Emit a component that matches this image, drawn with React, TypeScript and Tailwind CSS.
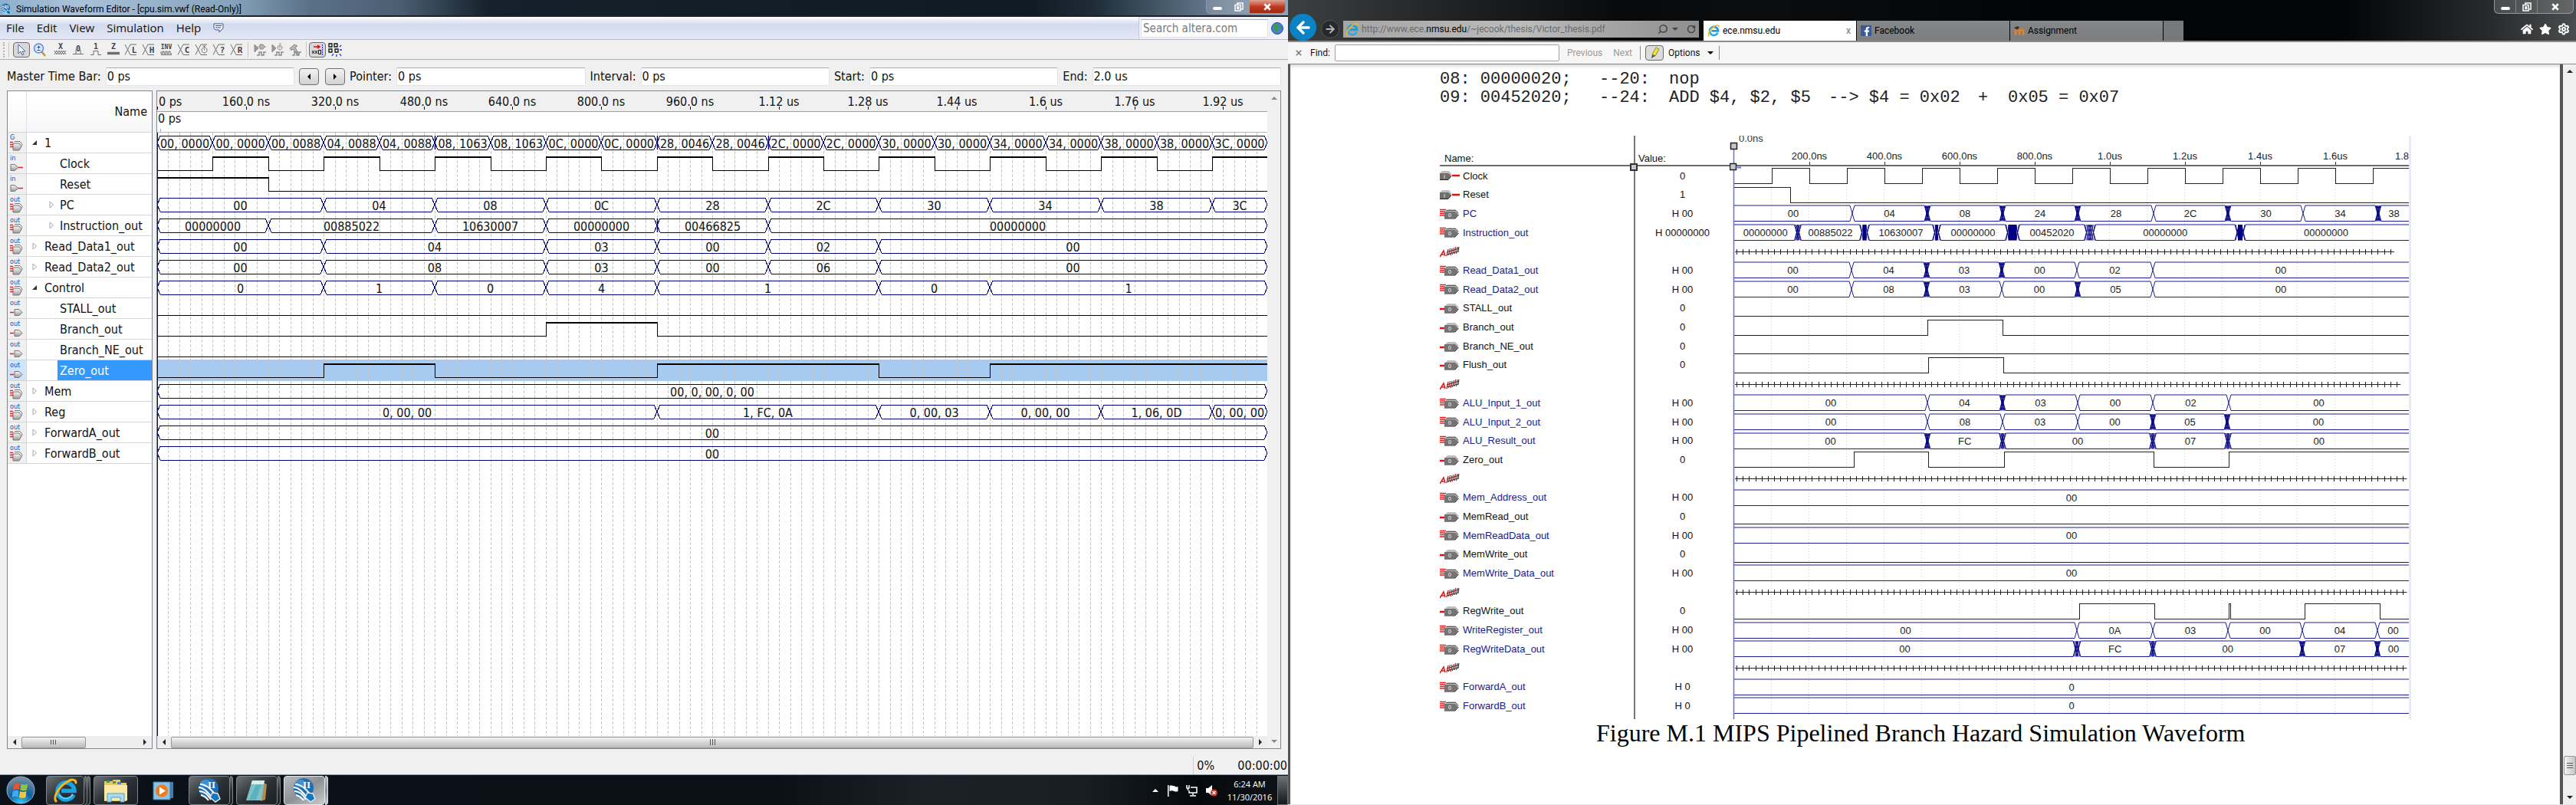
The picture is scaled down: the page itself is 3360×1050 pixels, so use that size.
import React from "react";
import { Search, RotateCw, Settings, ArrowLeft, ArrowRight } from "lucide-react";
import { FaHome, FaStar, FaFacebookF } from "react-icons/fa";

/* ---------- shared drawings ---------- */

function IeIcon({ className }: { className: string }) {
  return (
    <svg viewBox="0 0 32 32" className={className} aria-hidden="true">
      <path d="M27 21.5A11 11 0 1 1 28 16.5H11" fill="none" stroke="#1ba1e2" strokeWidth="5.5" />
      <path d="M26 20.8A10 10 0 0 1 8 21" fill="none" stroke="#7fd4f7" strokeWidth="1.5" />
      <path d="M4 30C0 25 7 12 18 5c6-4 12-4 12 1" fill="none" stroke="#f4b81c" strokeWidth="3" strokeLinecap="round" />
    </svg>
  );
}

function QuartusIcon({ className }: { className: string }) {
  return (
    <svg viewBox="0 0 32 32" className={className} aria-hidden="true">
      <ellipse cx="15" cy="13" rx="13" ry="13" fill="#1b6fb5" />
      <ellipse cx="11" cy="7" rx="7" ry="5" fill="#5ea9dc" opacity="0.6" />
      <path d="M2 12c6 0 13 6 18 15M3 17c6 0 11 4 15 11M5 22c4 1 7 3 10 7M4 8c8 0 16 7 20 15" fill="none" stroke="#fff" strokeWidth="2" />
      <path d="M20 19l7 1 3 7-6 4-7-6z" fill="#1476bd" stroke="#dfe8ee" strokeWidth="1.5" />
      <text x="14" y="13" fontFamily="Liberation Serif" fontWeight="bold" fontSize="13" fill="#fff">II</text>
    </svg>
  );
}

function Caret({ dir, className = "text-[#222]" }: { dir: "l" | "r" | "u" | "d"; className?: string }) {
  const d = { l: "M7 1L3 5l4 4z", r: "M3 1l4 4-4 4z", u: "M1 7l4-4 4 4z", d: "M1 3l4 4 4-4z" }[dir];
  return (
    <svg viewBox="0 0 10 10" className={`size-2.5 ${className}`} aria-hidden="true">
      <path d={d} fill="currentColor" />
    </svg>
  );
}

/* ---------- simulation window data ---------- */

type Bus = { at: number[]; v: string[]; bold?: number[] };
type Sig = { name: string; lvl: number; kind: "g" | "in" | "out" | "bus"; tree?: "open" | "closed"; bus?: Bus; bit?: number[]; sel?: boolean };

const NS = 0.7242;
const SIGS: Sig[] = [
  {
    name: "1", lvl: 0, kind: "g", tree: "open",
    bus: {
      at: Array.from({ length: 21 }, (_, i) => i * 100),
      v: ["00, 0000", "00, 0000", "00, 0088", "04, 0088", "04, 0088", "08, 1063", "08, 1063", "0C, 0000", "0C, 0000", "28, 0046", "28, 0046", "2C, 0000", "2C, 0000", "30, 0000", "30, 0000", "34, 0000", "34, 0000", "38, 0000", "38, 0000", "3C, 0000"],
      bold: [500, 900, 1100],
    },
  },
  { name: "Clock", lvl: 1, kind: "in", bit: Array.from({ length: 19 }, (_, i) => (i + 1) * 100) },
  { name: "Reset", lvl: 1, kind: "in", bit: [0, 200] },
  { name: "PC", lvl: 1, kind: "bus", tree: "closed", bus: { at: [0, 300, 500, 700, 900, 1100, 1300, 1500, 1700, 1900, 2000], v: ["00", "04", "08", "0C", "28", "2C", "30", "34", "38", "3C"] } },
  { name: "Instruction_out", lvl: 1, kind: "bus", tree: "closed", bus: { at: [0, 200, 500, 700, 900, 1100, 2000], v: ["00000000", "00885022", "10630007", "00000000", "00466825", "00000000"], bold: [900] } },
  { name: "Read_Data1_out", lvl: 0, kind: "bus", tree: "closed", bus: { at: [0, 300, 700, 900, 1100, 1300, 2000], v: ["00", "04", "03", "00", "02", "00"] } },
  { name: "Read_Data2_out", lvl: 0, kind: "bus", tree: "closed", bus: { at: [0, 300, 700, 900, 1100, 1300, 2000], v: ["00", "08", "03", "00", "06", "00"] } },
  { name: "Control", lvl: 0, kind: "bus", tree: "open", bus: { at: [0, 300, 500, 700, 900, 1300, 1500, 2000], v: ["0", "1", "0", "4", "1", "0", "1"] } },
  { name: "STALL_out", lvl: 1, kind: "out", bit: [] },
  { name: "Branch_out", lvl: 1, kind: "out", bit: [700, 900] },
  { name: "Branch_NE_out", lvl: 1, kind: "out", bit: [] },
  { name: "Zero_out", lvl: 1, kind: "out", bit: [300, 500, 900, 1300, 1500], sel: true },
  { name: "Mem", lvl: 0, kind: "bus", tree: "closed", bus: { at: [0, 2000], v: ["00, 0, 00, 0, 00"] } },
  { name: "Reg", lvl: 0, kind: "bus", tree: "closed", bus: { at: [0, 900, 1300, 1500, 1700, 1900, 2000], v: ["0, 00, 00", "1, FC, 0A", "0, 00, 03", "0, 00, 00", "1, 06, 0D", "0, 00, 00"] } },
  { name: "ForwardA_out", lvl: 0, kind: "bus", tree: "closed", bus: { at: [0, 2000], v: ["00"] } },
  { name: "ForwardB_out", lvl: 0, kind: "bus", tree: "closed", bus: { at: [0, 2000], v: ["00"] } },
];

const TIMES = ["0 ps", "160.0 ns", "320.0 ns", "480.0 ns", "640.0 ns", "800.0 ns", "960.0 ns", "1.12 us", "1.28 us", "1.44 us", "1.6 us", "1.76 us", "1.92 us"];
const px = (t: number) => Math.round(t * NS);

function EditorWaves() {
  return (
    <svg width="1449" height="787" className="block shrink-0 font-['DejaVu_Sans_Condensed','DejaVu_Sans',sans-serif] text-[16px]">
      {SIGS.map((s, i) => (s.sel ? <rect key={i} x="1" y={i * 27 - 1} width="1448" height="28" fill="#a6caf0" /> : null))}
      <g stroke="#c6c6c6" strokeDasharray="4 2" shapeRendering="crispEdges">
        {Array.from({ length: 99 }, (_, i) => (
          <line key={i} x1={px((i + 1) * 20) + 0.5} x2={px((i + 1) * 20) + 0.5} y1="0" y2="787" />
        ))}
      </g>
      {SIGS.map((s, i) => {
        const y = i * 27;
        if (s.bus) {
          const { at, v, bold } = s.bus;
          return (
            <g key={i}>
              {v.map((t, k) => {
                const a = px(at[k]);
                const b = px(at[k + 1]);
                return (
                  <g key={k}>
                    <path d={`M${a} ${y + 13}l4 -9H${b - 4}l4 9l-4 9H${a + 4}z`} fill="none" stroke="#00007f" shapeRendering="crispEdges" />
                    <text x={(a + b) / 2} y={y + 20} textAnchor="middle" fill="#111">{t}</text>
                  </g>
                );
              })}
              {bold?.map((t) => <path key={t} d={`M${px(t) + 0.5} ${y + 4}v18`} stroke="#00007f" strokeWidth="1.5" />)}
            </g>
          );
        }
        const edges = s.bit ?? [];
        const segs: React.ReactNode[] = [];
        let high = false;
        let from = 0;
        [...edges, 2000].forEach((t, k) => {
          if (t > from) {
            segs.push(<rect key={`h${k}`} x={px(from)} y={high ? y + 4 : y + 22} width={px(t) - px(from)} height={high ? 2 : 1} />);
          }
          if (t > 0 && t < 2000) segs.push(<rect key={`v${k}`} x={px(t)} y={y + 4} width="1" height="19" />);
          from = t;
          high = !high;
        });
        return <g key={i}>{segs}</g>;
      })}
      <rect x="0" y="0" width="1" height="787" fill="#0000c8" />
    </svg>
  );
}

function PinIcon({ kind }: { kind: Sig["kind"] }) {
  const label = kind === "g" ? "G" : kind === "in" ? "in" : "out";
  const multi = kind === "g" || kind === "bus";
  return (
    <svg width="18" height="22" viewBox="0 0 18 22" aria-hidden="true" className="font-['DejaVu_Sans_Condensed','DejaVu_Sans',sans-serif] text-[9px]">
      <defs>
        <linearGradient id="pin" x1="0" y1="0" x2="0" y2="1">
          <stop offset="0" stopColor="#f6f6f6" />
          <stop offset="1" stopColor="#9c9c9c" />
        </linearGradient>
      </defs>
      <text x="0" y="7" fill="#2b4fae">{label}</text>
      {multi ? (
        <>
          <path d="M6 9.5h7l3 4-1 2" fill="none" stroke="#777" />
          <path d="M4 12h8l3 4-3 5H4z" fill="url(#pin)" stroke="#777" />
          <path d="M0 10.500h4M0 13.500h4M0 16.500h4" stroke="#e0202a" strokeWidth="1.500" />
        </>
      ) : kind === "in" ? (
        <>
          <path d="M1 12.500h5l5 4-5 4H1z" fill="url(#pin)" stroke="#777" />
          <path d="M11 16.500h6" stroke="#e0202a" strokeWidth="1.500" />
        </>
      ) : (
        <>
          <path d="M6 12.500h6l4 4-4 4H6z" fill="url(#pin)" stroke="#777" />
          <path d="M0 16.500h5" stroke="#e0202a" strokeWidth="1.500" />
        </>
      )}
    </svg>
  );
}

const TOOL_ICONS: { t: string; w?: "x" | "n" | "u" | "z" | "b"; label: string }[] = [
  { t: "X", w: "x", label: "Forcing unknown" },
  { t: "0", w: "n", label: "Forcing low" },
  { t: "1", w: "u", label: "Forcing high" },
  { t: "Z", w: "z", label: "High impedance" },
  { t: "L", w: "b", label: "Weak low" },
  { t: "H", w: "b", label: "Weak high" },
  { t: "INV", label: "Invert" },
  { t: "C", w: "b", label: "Count value" },
  { t: "", w: "b", label: "Overwrite clock" },
  { t: "?", w: "b", label: "Arbitrary value" },
  { t: "R", w: "b", label: "Random values" },
];

function ToolGlyph({ t, w }: { t: string; w?: string }) {
  return (
    <svg width="18" height="18" viewBox="0 0 18 18" fill="none" stroke="#6e6e6e" strokeWidth="1" aria-hidden="true" className="font-['DejaVu_Sans_Mono',monospace]">
      {w === "x" && <path d="M1 10l3 5 3-5 3 5 3-5 3 5M1 15l3-5 3 5 3-5 3 5 3-5" />}
      {w === "n" && <path d="M2 14.500h4V8.500M12 8.500v6h4M6 14.500h6" />}
      {w === "u" && <path d="M2 15.500h4v-5h6v5h4" />}
      {w === "z" && <path d="M1 13.500h16" strokeWidth="3.500" />}
      {w === "b" && <path d="M1 2l7 13.500h8M8 2L1 15.500M8 2h8" />}
      {t === "" && <path d="M12.500 6v-2M10.500 4h4M12.500 6a3.500 3.500 0 1 0 .1 0M12.500 9.500v-2" />}
      {t === "INV" && <path d="M2 11v3h2v-3h2v3h2v-3h2v3h2v-3h2v3h2M2 15.500h14" />}
      <text
        x={w === "b" ? 13 : 9}
        y={w === "b" ? 13 : w === "n" ? 11 : 8}
        textAnchor="middle"
        fontSize={t === "INV" ? 8 : w === "b" ? 11 : 10}
        fontWeight="bold"
        stroke="none"
        fill="#444"
      >
        {t}
      </text>
    </svg>
  );
}

function TimeField({ id, label, value }: { id: string; label: string; value: string }) {
  return (
    <>
      <label htmlFor={id}>{label}</label>
      <input id={id} defaultValue={value} readOnly className="h-6 w-0 min-w-0 flex-1 rounded-xs border border-[#e2e3ea] border-t-[#abadb3] bg-white px-px outline-none" />
    </>
  );
}

function HScroll({ thumb, grip }: { thumb: string; grip: string }) {
  return (
    <div className="flex h-4 shrink-0 items-center bg-[#eeeeee]">
      <button aria-label="Scroll left" className="flex w-[18px] justify-center"><Caret dir="l" /></button>
      <div className="flex flex-1">
        <div className={`flex h-[15px] items-center justify-center gap-0.5 rounded-xs border border-[#979797] bg-linear-to-b from-[#f4f4f4] via-[#d6d6d6] to-[#bcbcbc] ${thumb}`}>
          {[0, 1, 2].map((i) => <span key={i} className={`w-px bg-[#555] ${grip}`} />)}
        </div>
      </div>
      <button aria-label="Scroll right" className="flex w-[18px] justify-center"><Caret dir="r" /></button>
    </div>
  );
}

function WindowButtons({ close }: { close: string }) {
  return (
    <div className="mr-[3px] flex h-[18px] overflow-hidden rounded-b-md border border-t-0 border-[#8c9aa6]">
      <button aria-label="Minimize" className="flex w-7 items-center justify-center border-r border-[#8c9aa6]/70 bg-white/15">
        <span className="mt-1 h-1 w-3 rounded-xs bg-white" />
      </button>
      <button aria-label="Restore" className="flex w-7 items-center justify-center border-r border-[#8c9aa6]/70 bg-white/15">
        <svg viewBox="0 0 12 12" className="size-3" fill="none" stroke="#fff" strokeWidth="1.500"><path d="M4 3V1h7v8H9M1 3.500h7V11H1zM4 6v2.500h1.500V6z" /></svg>
      </button>
      <button aria-label="Close" className={`flex w-[46px] items-center justify-center ${close}`}>
        <svg viewBox="0 0 12 12" className="size-2.5" stroke="#fff" strokeWidth="3"><path d="M1.500 1.500l9 9M10.500 1.500l-9 9" /></svg>
      </button>
    </div>
  );
}

/* ---------- simulation window ---------- */

function Editor() {
  return (
    <section className="flex min-h-0 flex-1 flex-col bg-[#f0f0f0] font-['DejaVu_Sans_Condensed','DejaVu_Sans',sans-serif] text-[16px] text-[#111]">
      <header className="flex h-[22px] items-start justify-between border-b-2 border-[#1a222b] bg-[linear-gradient(90deg,#8fb0cc_0%,#a9c2d8_6%,#86a3bd_18%,#5b7188_24%,#4b5f73_31%,#14202b_38%,#101a22_80%,#1f2d39_85%,#5b7084_93%,#8fa4b8_100%)]">
        <div className="flex h-5 items-center gap-1.5 pt-1 font-[Roboto,sans-serif] text-[12px] text-black">
          <QuartusIcon className="h-4 w-[15px]" />
          <h1>Simulation Waveform Editor - [cpu.sim.vwf (Read-Only)]</h1>
        </div>
        <WindowButtons close="bg-linear-to-b from-[#dba294] via-[#c2391f] to-[#9c2a12]" />
      </header>

      <nav className="flex h-[30px] items-center border-b border-[#b6bccc] bg-linear-to-b from-white via-[#d4dbee] via-35% to-[#e3e7f6] font-['Open_Sans',sans-serif] text-[15px]">
        <div className="flex items-center gap-4 pl-2">
          {["File", "Edit", "View", "Simulation", "Help"].map((m) => <button key={m}>{m}</button>)}
          <button aria-label="Messages">
            <svg width="14" height="14" viewBox="0 0 14 14" fill="#eef4ff" stroke="#3b5a8c"><path d="M1 1h12v6l-5 5V9H3L1 7zM3 3.500h8M3 6h7" /></svg>
          </button>
        </div>
        <div className="ml-auto flex h-full items-center gap-1 border-l border-[#c3c9d8] bg-[#eef1fa] pr-1.5 pl-0.5">
          <input aria-label="Search altera.com" placeholder="Search altera.com" className="h-6 w-[166px] border border-t-[#abadb3] border-[#e2e3ea] bg-white px-0.5 font-['DejaVu_Sans_Condensed','DejaVu_Sans',sans-serif] text-[15px] outline-none placeholder:text-[#7b7b7b]" />
          <button aria-label="Search">
            <svg width="16" height="16" viewBox="0 0 16 16"><circle cx="8" cy="8" r="7.500" fill="#4d7fd6" stroke="#23479a" /><path d="M4 3l5-1 1 3-2 2 1 3-2 4-2-4-2-3zM11 5l3 1-1 4-2-2z" fill="#39a03c" /></svg>
          </button>
        </div>
      </nav>

      <div className="flex h-[26px] items-center border-b border-[#b0b0b0] pl-1">
        <span className="h-5 border-l-2 border-dotted border-[#b5b5b5]" />
        <span className="mx-[5px] h-5 border-l border-[#c8c8c8]" />
        <button aria-label="Selection tool" className="flex h-5 w-[22px] items-center justify-center rounded-sm border border-[#6c6c6c] bg-[#d8d8d8]">
          <svg width="12" height="16" viewBox="0 0 12 16" fill="#fff" stroke="#4668a0"><path d="M2 1v12l3-3 2 5 2-1-2-4h4z" /></svg>
        </button>
        <button aria-label="Zoom tool" className="mr-1 flex w-6 justify-center">
          <svg width="17" height="18" viewBox="0 0 17 18" fill="none"><path d="M11 11l5 6" stroke="#c98f4a" strokeWidth="2.500" /><circle cx="7.500" cy="7" r="6" fill="#dbe9ff" stroke="#5f86d8" strokeWidth="1.500" /><path d="M7.500 3.500v4M5.500 5.500h4M5.500 9.500h4" stroke="#1c49a8" /></svg>
        </button>
        {TOOL_ICONS.map((o) => (
          <button key={o.label} aria-label={o.label} className="flex w-[23px] justify-center"><ToolGlyph t={o.t} w={o.w} /></button>
        ))}
        <span className="mx-[3px] h-5 border-l border-[#c8c8c8]" />
        {[0, 1, 2].map((i) => (
          <button key={i} aria-label={["Run functional simulation", "Run timing simulation", "Generate testbench"][i]} className="flex w-[23px] justify-center">
            <svg width="18" height="18" viewBox="0 0 18 18" fill="none" stroke="#8a8a8a">
              {i < 2 && <path d="M2 2v10l5-5z" fill="#9a9a9a" />}
              {i === 0 && <path d="M9 2h4l2 3-2 3H9zM6 5h3M15 5h2" fill="#b5b5b5" />}
              {i === 1 && <path d="M12 3a3 3 0 1 0 .1 0M12 6V4M11 1h3" fill="#dedede" />}
              {i === 2 && <path d="M2 7l6-5 4 2-3 2 5 9-2 1-6-8-2 2z" fill="#b5b5b5" />}
              <path d="M5 16h3v-4h3v4h3v-4h3" strokeWidth="1.500" />
            </svg>
          </button>
        ))}
        <span className="mx-[3px] h-5 border-l border-[#c8c8c8]" />
        <button aria-label="Snap to transition" className="flex h-5 w-[22px] items-center justify-center rounded-sm border border-[#6c6c6c] bg-[#d8d8d8]">
          <svg width="16" height="16" viewBox="0 0 16 16" fill="none" stroke="#111"><path d="M3 4h7M8 2l3 2-3 2" stroke="#e00" strokeWidth="1.500" /><path d="M1 9l3 4M4 9l-3 4M5 9l3 4M8 9l-3 4M9.500 8.500h3v5h-3z" /><path d="M14.500 1v14" stroke="#22f" strokeDasharray="2 1" /></svg>
        </button>
        <button aria-label="Snap to grid" className="flex w-6 justify-center">
          <svg width="18" height="18" viewBox="0 0 18 18" fill="none" stroke="#111" strokeWidth="1.300"><path d="M1 1h4v4H1zM8 1h4v4H8zM1 8h4v4H1zM9 8h4v4H9z" /><path d="M15 5l2-2M15 9h3M7 14l-2 3M11 15v3M15 14l2 3" stroke="#22f" /></svg>
        </button>
      </div>

      <div className="flex h-10 items-center gap-1.5 pt-1 pr-[9px] pl-[9px]">
        <TimeField id="master" label="Master Time Bar:" value="0 ps" />
        <div className="flex gap-2">
          {(["l", "r"] as const).map((d) => (
            <button key={d} aria-label={d === "l" ? "Previous transition" : "Next transition"} className="flex h-[22px] w-[26px] items-center justify-center rounded-sm border border-[#707070] bg-linear-to-b from-[#f4f4f4] to-[#d0d0d0]">
              <Caret dir={d} className="text-black" />
            </button>
          ))}
        </div>
        <TimeField id="pointer" label="Pointer:" value="0 ps" />
        <TimeField id="interval" label="Interval:" value="0 ps" />
        <TimeField id="start" label="Start:" value="0 ps" />
        <TimeField id="end" label="End:" value="2.0 us" />
      </div>

      <div className="flex min-h-0 flex-1 gap-[5px] pr-[9px] pl-[9px]">
        <div className="flex w-[190px] flex-col border border-[#828790] bg-white">
          <div className="flex h-[54px] shrink-0 border-b border-[#d5d5d5] bg-linear-to-b from-white from-20% to-[#f5f6f8]">
            <span className="w-[25px] border-r border-[#e0e2e5]" />
            <span className="flex-1 self-center pr-1.5 text-right">Name</span>
          </div>
          <ul className="flex-1">
            {SIGS.map((s) => (
              <li key={s.name} className="flex h-[27px] border-b border-[#d5d5d5]">
                <span className={`flex w-[25px] shrink-0 items-center justify-center border-r border-[#d5d5d5] ${s.sel ? "bg-[#cfe5fb]" : "bg-[#f0f0f0]"}`}>
                  <PinIcon kind={s.kind} />
                </span>
                <span className={`flex w-5 shrink-0 items-center justify-center ${s.lvl ? "mr-px ml-[22px]" : "mr-[3px]"}`}>
                  {s.tree === "open" && <svg width="7" height="8" viewBox="0 0 7 8"><path d="M6 1v6H0z" fill="#333" /></svg>}
                  {s.tree === "closed" && <svg width="7" height="10" viewBox="0 0 7 10"><path d="M1 1v8l4.500-4z" fill="#fff" stroke="#a5a5a5" /></svg>}
                </span>
                <span className={`flex flex-1 items-center pt-0.5 whitespace-nowrap ${s.sel ? "-ml-[3px] bg-[#3399ff] pl-[3px] text-white" : ""}`}>{s.name}</span>
              </li>
            ))}
          </ul>
          <HScroll thumb="w-[55%]" grip="h-1.5" />
        </div>

        <div className="flex min-w-0 flex-1 border border-[#828790] bg-white">
          <div className="flex min-w-0 flex-1 flex-col">
            <div className="h-[54px] shrink-0 overflow-hidden border-b border-[#b5b5b5]">
              <svg width="1449" height="53" className="block text-[16px]">
                <rect width="1449" height="26" fill="#f0f0f0" />
                <rect y="26" width="1449" height="1" fill="#a0a0a0" />
                {TIMES.map((t, i) => (
                  <g key={t}>
                    <rect x={px(i * 160)} y="20" width="1" height="4" fill="#111" />
                    <text x={i ? px(i * 160) : 2} y="19" textAnchor={i ? "middle" : "start"} fill="#111">{t}</text>
                  </g>
                ))}
                <text x="1" y="41" fill="#111">0 ps</text>
                <path d="M4.500 49v4" stroke="#aaa" />
              </svg>
            </div>
            <div className="min-h-0 flex-1 overflow-hidden"><EditorWaves /></div>
            <HScroll thumb="flex-1" grip="h-2" />
          </div>
          <div className="flex w-[17px] flex-col items-center justify-between bg-[#f0f0f0] py-1">
            <button aria-label="Scroll up"><Caret dir="u" className="text-[#888]" /></button>
            <button aria-label="Scroll down"><Caret dir="d" className="text-[#888]" /></button>
          </div>
        </div>
      </div>

      <footer className="flex h-[33px] items-center justify-end pt-2.5">
        <span className="w-[58px] border-l border-[#d0d0d0] pl-1">0%</span>
        <span className="pr-px">00:00:00</span>
      </footer>
    </section>
  );
}

/* ---------- taskbar ---------- */

function TaskButton({ label, stack = 0, active, children }: { label: string; stack?: number; active?: boolean; children: React.ReactNode }) {
  const face = active ? "from-[#b9bcbf] via-[#8d9195] to-[#c9ccce] border-[#e4e6e8]" : "from-[#6d7276] via-[#2c3135] to-[#1c2024] border-[#7f858a]";
  return (
    <button aria-label={label} className="flex h-[38px] w-[58px]">
      <span className={`flex h-full flex-1 items-center justify-center rounded-sm border bg-linear-to-br ${face}`}>{children}</span>
      {Array.from({ length: stack }, (_, i) => (
        <span key={i} className={`h-full w-1 rounded-r-sm border border-l-0 bg-linear-to-b ${face}`} />
      ))}
    </button>
  );
}

function Taskbar() {
  return (
    <footer className="flex h-10 items-center border-t border-[#8a98a6] bg-[linear-gradient(90deg,#0a1118_0%,#0b1016_60%,#1b2126_72%,#191e22_84%,#05090c_93%,#101418_100%)] font-['Open_Sans',sans-serif] text-white">
      <button aria-label="Start" className="mr-3.5 ml-2">
        <svg width="38" height="37" viewBox="0 0 38 37">
          <defs>
            <radialGradient id="orb" cx="0.5" cy="1" r="0.9"><stop offset="0" stopColor="#2fd0ff" /><stop offset="0.5" stopColor="#0d5f9e" /><stop offset="1" stopColor="#6d8aa0" /></radialGradient>
          </defs>
          <ellipse cx="19" cy="18.500" rx="18" ry="17.500" fill="url(#orb)" stroke="#9fb6c6" />
          <path d="M10 11q4-3 8-1l-1 8q-4-2-8 1z" fill="#e8542a" />
          <path d="M19.500 10.500q4 2 8.500 0l-1 8q-4 2-8.500 0z" fill="#8cc63f" />
          <path d="M8.500 20.500q4-3 8-1l-1 8q-4-2-8 1z" fill="#3fa9f5" />
          <path d="M18 20q4 2 8.500 0l-1 8q-4 2-8.500 0z" fill="#fbc52d" />
        </svg>
      </button>
      <div className="flex gap-1">
        <TaskButton label="Internet Explorer" stack={2}><IeIcon className="size-8" /></TaskButton>
        <TaskButton label="File Explorer">
          <svg width="36" height="32" viewBox="0 0 36 32"><path d="M3 4h10l2-2h9v4h8v24H3z" fill="#e9c964" /><path d="M3 9h30v20H3z" fill="#fae9a6" /><path d="M6 3h4v3H6zM14 4h4v3h-4z" fill="#3b9b4e" /><path d="M20 5h5v3h-5z" fill="#3f7fd0" /><path d="M7 31V20h22v11h-5v-6H12v6z" fill="#a8dcf5" stroke="#4f9fcc" /></svg>
        </TaskButton>
        <button aria-label="Media Player" className="flex h-[38px] w-[58px] items-center justify-center">
          <svg width="28" height="26" viewBox="0 0 28 26"><path d="M6 2h21v21H6z" fill="#3d7fb0" /><path d="M1 2h22v23H1z" fill="#8cc3e4" stroke="#3a78a8" /><circle cx="12" cy="13.500" r="8" fill="#f07a1c" /><path d="M9 8.500v10l8-5z" fill="#fff" /></svg>
        </button>
        <TaskButton label="Quartus II" stack={1}><QuartusIcon className="size-8" /></TaskButton>
        <TaskButton label="Notepad" stack={1}>
          <svg width="32" height="30" viewBox="0 0 32 30"><path d="M22 4l7 3-2 20-6 2z" fill="#b58b4c" /><path d="M10 2h16l-4 26H2z" fill="#79c3cc" /><path d="M10 2h16l-1 5H8.500z" fill="#d5eef0" /><path d="M15 8L6 27h9l7-20z" fill="#4ba5b2" opacity="0.6" /></svg>
        </TaskButton>
        <TaskButton label="Simulation Waveform Editor" stack={1} active><QuartusIcon className="size-8" /></TaskButton>
      </div>
      <div className="ml-auto flex items-center gap-2.5">
        <button aria-label="Show hidden icons"><Caret dir="u" className="text-white" /></button>
        <svg width="15" height="16" viewBox="0 0 15 16" fill="#fff"><path d="M1 1h1.500v15H1zM3.500 2c3-1.500 4 1 7 0v1c1.500.5 3 .5 4 0v6c-2 1-3.500.5-5 0-2-1-4-1-6 0z" /></svg>
        <svg width="15" height="16" viewBox="0 0 15 16" fill="none" stroke="#fff" strokeWidth="1.500"><path d="M6 4h8v7H4V8M9 11v3M5 15h8M1 1v4h3V1M2.500 5v3" /></svg>
        <svg width="16" height="16" viewBox="0 0 16 16"><path d="M1 5h3l5-4v14l-5-4H1z" fill="#fff" /><circle cx="11.500" cy="11" r="4.500" fill="#d92a1c" /><path d="M9.500 9l4 4M13.500 9l-4 4" stroke="#fff" strokeWidth="1.500" /></svg>
        <button className="w-16 text-center text-[11px] leading-[17px]">6:24 AM<br />11/30/2016</button>
        <button aria-label="Show desktop" className="-ml-1.5 h-[38px] w-3.5 border border-[#6b7278] bg-linear-to-b from-[#6d7276] to-[#15191c]" />
      </div>
    </footer>
  );
}

/* ---------- thesis figure ---------- */

type Mark = number | [number, number];
type FigRow = { name?: string; kind?: "in" | "out" | "bus"; val?: string; at?: Mark[]; v?: string[]; bit?: number[] };
const FIG: FigRow[] = [
  { name: "Clock", kind: "in", val: "0", bit: Array.from({ length: 17 }, (_, i) => (i + 1) * 49) },
  { name: "Reset", kind: "in", val: "1", bit: [0, 73] },
  { name: "PC", kind: "bus", val: "H 00", at: [154, [252, 2], [350, 2], [448, 2], 547, [644, 2], 742, [840, 2]], v: ["00", "04", "08", "24", "28", "2C", "30", "34", "38"] },
  { name: "Instruction_out", kind: "bus", val: "H 00000000", at: [[83, 3], [170, 7], [264, 5], [363, 13], [464, 9], [660, 8]], v: ["00000000", "00885022", "10630007", "00000000", "00452020", "00000000", "00000000"] },
  {},
  { name: "Read_Data1_out", kind: "bus", val: "H 00", at: [153, [251, 2], [349, 2], 447, 546], v: ["00", "04", "03", "00", "02", "00"] },
  { name: "Read_Data2_out", kind: "bus", val: "H 00", at: [153, [251, 2], 349, [448, 2], 546], v: ["00", "08", "03", "00", "05", "00"] },
  { name: "STALL_out", kind: "out", val: "0", bit: [] },
  { name: "Branch_out", kind: "out", val: "0", bit: [252, 350] },
  { name: "Branch_NE_out", kind: "out", val: "0", bit: [] },
  { name: "Flush_out", kind: "out", val: "0", bit: [253, 351] },
  {},
  { name: "ALU_Input_1_out", kind: "bus", val: "H 00", at: [252, [350, 2], 448, 546, 645], v: ["00", "04", "03", "00", "02", "00"] },
  { name: "ALU_Input_2_out", kind: "bus", val: "H 00", at: [252, 350, 448, [546, 2], [643, 2]], v: ["00", "08", "03", "00", "05", "00"] },
  { name: "ALU_Result_out", kind: "bus", val: "H 00", at: [[252, 2], [350, 3], [546, 3], [644, 3]], v: ["00", "FC", "00", "07", "00"] },
  { name: "Zero_out", kind: "out", val: "0", bit: [156, 253, 352, 547, 645] },
  {},
  { name: "Mem_Address_out", kind: "bus", val: "H 00", at: [], v: ["00"] },
  { name: "MemRead_out", kind: "out", val: "0", bit: [] },
  { name: "MemReadData_out", kind: "bus", val: "H 00", at: [], v: ["00"] },
  { name: "MemWrite_out", kind: "out", val: "0", bit: [] },
  { name: "MemWrite_Data_out", kind: "bus", val: "H 00", at: [], v: ["00"] },
  {},
  { name: "RegWrite_out", kind: "out", val: "0", bit: [450, 548, 645, 647, 744, 842] },
  { name: "WriteRegister_out", kind: "bus", val: "H 00", at: [447, 546, 644, 741, 839], v: ["00", "0A", "03", "00", "04", "00"] },
  { name: "RegWriteData_out", kind: "bus", val: "H 00", at: [[447, 4], [546, 3], [741, 2], [839, 2]], v: ["00", "FC", "00", "07", "00"] },
  {},
  { name: "ForwardA_out", kind: "bus", val: "H 0", at: [], v: ["0"] },
  { name: "ForwardB_out", kind: "bus", val: "H 0", at: [], v: ["0"] },
];
const PITCH = 716 / 29;
const END = 880;

function FigIcon({ kind }: { kind?: FigRow["kind"] }) {
  if (!kind) {
    return (
      <svg width="26" height="16" viewBox="0 0 26 16" fill="none" aria-hidden="true">
        <path d="M0 15l5-8 2 7M2 12h5" stroke="#e02020" strokeWidth="1.600" />
        <path d="M9 14l2-9M14 13l2-9M19 11l2-9" stroke="#e02020" strokeWidth="1.400" />
        <path d="M11.500 13l2-9M16.500 12l2-9M21.500 11l2-9M24 9l1-7M9 9l16-5M9 12l15-4" stroke="#333" />
      </svg>
    );
  }
  return (
    <svg width="26" height="14" viewBox="0 0 26 14" aria-hidden="true" className="font-['Liberation_Sans',sans-serif] text-[7px]">
      {kind === "in" && (
        <>
          <path d="M0 4l3-3h9l4 5-4 2z" fill="#bdbdbd" />
          <path d="M0 4h11l4 3.500-4 4.500H0z" fill="#6e6e6e" />
          <path d="M0 12.500h11l4-5" fill="none" stroke="#222" />
          <path d="M16 7h10" stroke="#e81010" strokeWidth="2.500" />
          <text x="5" y="11" fill="#fff">I</text>
        </>
      )}
      {kind !== "in" && (
        <>
          {kind === "bus" ? <path d="M0 1.500h8M0 4h7M0 6.500h6M0 9h6" stroke="#f01818" strokeWidth="1.500" /> : <path d="M0 8h7" stroke="#e81010" strokeWidth="2.500" />}
          <path d="M7 4l3-3h10l5 5-4 2z" fill="#bdbdbd" />
          {kind === "bus" && <path d="M8 2.500h13l3 4" stroke="#444" fill="none" strokeWidth="0.800" />}
          <path d="M6 4h14l4 4-4 4.500H6z" fill="#747474" />
          <path d="M6 13h14l4.500-5" fill="none" stroke="#222" />
          <text x="11" y="11" fill="#fff">0</text>
        </>
      )}
    </svg>
  );
}

function FigWaves() {
  const base = 40;
  return (
    <svg width="892" height="761" className="block shrink-0 font-['Liberation_Sans',sans-serif] text-[13px]">
      <g transform="translate(6 0)">
        <text x="6" y="8" fill="#333">0.0ns</text>
        {["200.0ns", "400.0ns", "600.0ns", "800.0ns", "1.0us", "1.2us", "1.4us", "1.6us"].map((t, i) => (
          <g key={t}>
            <text x={(i + 1) * 98} y="31" textAnchor="middle" fill="#222">{t}</text>
            <rect x={(i + 1) * 98} y="34" width="1" height="5" fill="#333" />
          </g>
        ))}
        <text x={END - 18} y="31" fill="#222">1.8</text>
        <rect x="-6" y="38" width={END + 6} height="2" fill="#6b6b6b" />
        <g stroke="#cfcfcf" strokeDasharray="1 3" shapeRendering="crispEdges">
          {Array.from({ length: 17 }, (_, i) => <line key={i} x1={(i + 1) * 49 - 0.5} x2={(i + 1) * 49 - 0.5} y1="62" y2="756" />)}
        </g>
        {FIG.map((r, i) => {
          const y = Math.round(i * PITCH) + base;
          const top = y + 2;
          const bot = y + 22.5;
          if (!r.kind) {
            const n = i === 4 ? 105 : i === 11 ? 106 : 107;
            let d = `M1 ${y + 12.5}H${n * 8.2}`;
            for (let k = 0; k < n; k++) d += `M${Math.round(4 + k * 8.2) - 0.5} ${y + 9}v7`;
            return <path key={i} d={d} stroke="#222" fill="none" />;
          }
          if (r.bit) {
            let hi = false;
            let d = r.bit[0] === 0 ? `M0 ${top}` : `M0 ${bot}`;
            r.bit.forEach((x) => {
              hi = !hi;
              if (x > 0) d += `H${x + 0.5}V${hi ? top : bot}`;
            });
            d += `H${END}`;
            return <path key={i} d={d} fill="none" stroke="#222" shapeRendering="crispEdges" />;
          }
          const marks = (r.at ?? []).map((m) => (typeof m === "number" ? [m, 0] : m));
          const xs = [...marks, [END, 0]];
          let from = 0;
          const mid = (top + bot) / 2;
          return (
            <g key={i} stroke="#1c1c96" fill="none">
              {xs.map(([x, w], k) => {
                const a = from;
                const b = x - w / 2;
                from = x + w / 2;
                const first = k === 0;
                const last = k === xs.length - 1;
                const l = first ? `M0 ${top}` : `M${a} ${mid}L${a + 3} ${top}`;
                const rt = last ? `H${END}` : `H${b - 3}L${b} ${mid}L${b - 3} ${bot}`;
                const back = last ? `M${END} ${bot}` : "";
                const close = first ? "H0" : `H${a + 3}L${a} ${mid}`;
                let hatch = "";
                if (w > 0) {
                  const step = w === 9 ? 2.25 : w / 2;
                  for (let o = -w / 2; o <= w / 2; o += step) {
                    hatch += `M${x + o - 2} ${top}L${x + o + 2} ${bot}M${x + o + 2} ${top}L${x + o - 2} ${bot}`;
                  }
                }
                return (
                  <g key={k}>
                    <path d={`${l}${rt}${back}${close}`} />
                    {w > 0 && <path d={hatch} stroke="#000080" strokeWidth="1" />}
                    {w >= 5 && w !== 9 && <rect x={x - w / 2 + 1} y={top} width={w - 2} height="20.5" fill="#000080" stroke="none" />}
                    <text x={(a + b) / 2} y={y + 17} textAnchor="middle" stroke="none" fill="#222">{r.v?.[k]}</text>
                  </g>
                );
              })}
            </g>
          );
        })}
        <path d="M-0.500 14V761" stroke="#6a6af0" strokeWidth="1.500" />
        <path d="M4 41.500h5" stroke="#6a6af0" strokeWidth="2" />
        <rect x="-4.500" y="9.500" width="8" height="8" fill="#c8c8c8" stroke="#222" strokeWidth="1.500" />
        <rect x="-5.500" y="36.500" width="8" height="8" fill="#c8c8c8" stroke="#222" strokeWidth="1.500" />
        <rect x={END} y="0" width="3" height="761" fill="#e9e9f2" />
      </g>
    </svg>
  );
}

/* ---------- browser window ---------- */

function Tab({ label, icon, active }: { label: string; icon: React.ReactNode; active?: boolean }) {
  return (
    <div className={`flex h-[26px] w-[199px] items-center gap-1 px-[5px] ${active ? "bg-white" : "bg-linear-to-b from-[#85888a] to-[#7b7c7e]"}`}>
      {icon}
      <a href="#tab" className="flex-1 text-black">{label}</a>
      {active && <button aria-label="Close tab" className="mr-0.5 font-bold text-[#9a9a9a]">x</button>}
    </div>
  );
}

const CODE = [
  ["08: 00000020;", "--20:", "nop"],
  ["09: 00452020;", "--24:", "ADD $4, $2, $5", "--> $4 = 0x02", "+", "0x05 = 0x07"],
];

function Browser() {
  return (
    <section className="flex min-w-0 flex-1 flex-col bg-white font-[Roboto,sans-serif] text-[12px] text-[#111]">
      <header className="flex h-[55px] flex-col border-b-2 border-[#8b8b8b] bg-[linear-gradient(90deg,#3d3f41_0%,#1d1f21_14%,#07090a_26%,#0b0d0f_36%,#020406_58%,#030507_82%,#26282a_93%,#4a4c4e_100%)]">
        <div className="flex h-[27px] justify-end">
          <WindowButtons close="bg-white/15" />
        </div>
        <div className="flex h-[26px] items-end">
          <div className="flex w-[72px] items-center gap-1.5 pl-0.5">
            <button aria-label="Back" className="-mt-2 flex size-[35px] shrink-0 items-center justify-center rounded-full bg-[#0a82c4] text-white"><ArrowLeft className="size-6" strokeWidth={3.5} /></button>
            <button aria-label="Forward" className="-mt-1 flex size-6 shrink-0 items-center justify-center rounded-full border border-[#555] bg-[#26282a] text-[#b5b5b5]"><ArrowRight className="size-4" strokeWidth={3} /></button>
          </div>
          <div className="mb-1 flex h-[22px] w-[464px] items-center gap-1 bg-linear-to-r from-[#a5a5a5] via-[#bcbcbc] to-[#8e8e8e] pr-1 pl-[3px] text-[#6b6b6b]">
            <IeIcon className="size-[17px]" />
            <span className="flex-1">http://www.ece.<b className="font-normal text-black">nmsu.edu</b>/~jecook/thesis/Victor_thesis.pdf</span>
            <button aria-label="Search"><Search className="size-3.5 -scale-x-100 text-[#444]" strokeWidth={2.5} /></button>
            <Caret dir="d" className="mr-1.5 text-[#444]" />
            <button aria-label="Refresh"><RotateCw className="size-3 text-[#444]" strokeWidth={3} /></button>
          </div>
          <div className="ml-1.5 flex gap-px">
            <Tab label="ece.nmsu.edu" active icon={<IeIcon className="size-4" />} />
            <Tab label="Facebook" icon={<span className="flex size-3.5 items-end justify-end bg-[#3b5998] text-white"><FaFacebookF className="size-3" /></span>} />
            <Tab
              label="Assignment"
              icon={<svg width="14" height="13" viewBox="0 0 14 13"><path d="M2 12V6.500Q4.500 3 7 6.500V12M7 6.500Q10 3 12 6.500V12" fill="none" stroke="#f07f1e" strokeWidth="2.500" /><path d="M0 2l5-2 2 2-3 3z" fill="#333" /></svg>}
            />
            <button aria-label="New tab" className="h-[26px] w-[26px] bg-[#77787a]" />
          </div>
          <div className="mr-2 mb-[7px] ml-auto flex gap-2 text-white">
            <button aria-label="Home"><FaHome className="size-4" /></button>
            <button aria-label="Favorites"><FaStar className="size-4" /></button>
            <button aria-label="Tools"><Settings className="size-4" strokeWidth={3} /></button>
          </div>
        </div>
      </header>

      <div className="flex h-[29px] shrink-0 items-center border-b border-[#8a8a8a] bg-[#f6f6f6] pl-2.5">
        <button aria-label="Close find bar" className="w-[19px] text-left text-[#7a7a7a]">
          <svg viewBox="0 0 10 10" className="size-2" stroke="currentColor" strokeWidth="2"><path d="M1 1l8 8M9 1l-8 8" /></svg>
        </button>
        <label htmlFor="find" className="w-8">Find:</label>
        <input id="find" className="h-[22px] w-[293px] rounded-xs border border-[#a3a3a3] bg-white px-1 outline-none" />
        <button className="ml-2.5 text-[#9b9b9b]">Previous</button>
        <button className="ml-3.5 text-[#9b9b9b]">Next</button>
        <span className="mx-1.5 ml-2.5 h-[18px] border-l border-[#8a8a8a]" />
        <button aria-label="Highlight matches" className="mr-1.5 flex h-5 w-6 items-center justify-center rounded-sm border border-[#6c6c6c] bg-[#dcdcdc]">
          <svg width="14" height="16" viewBox="0 0 14 16"><path d="M9 1l4 2-5 9-4-2z" fill="#f2e437" stroke="#8a8a30" /><path d="M4 10l4 2-5 3z" fill="#555" /></svg>
        </button>
        <button className="flex items-center gap-2">Options <Caret dir="d" className="text-black" /></button>
        <span className="ml-1.5 h-[18px] border-l border-[#8a8a8a]" />
      </div>

      <div className="flex min-h-0 flex-1 border-b border-[#e4e4e4]">
        <main className="min-w-0 flex-1 overflow-hidden border-r-4 border-l-3 border-[#555] bg-white pt-2 pl-[195px] shadow-[inset_0_4px_4px_-2px_#d0d0d0]">
          <div className="font-['Liberation_Mono',monospace] text-[22px] leading-6 text-[#222]">
            {CODE.map((c, i) => (
              <p key={i} className="flex whitespace-pre">
                <span className="w-[208px]">{c[0]}</span>
                <span className="w-[91px]">{c[1]}</span>
                <span className="w-[208px]">{c[2]}</span>
                <span className="w-[195px]">{c[3]}</span>
                <span className="w-[39px]">{c[4]}</span>
                <span>{c[5]}</span>
              </p>
            ))}
          </div>

          <figure className="pt-[37px]">
            <div className="flex font-['Liberation_Sans',sans-serif] text-[13px]">
              <div className="relative w-[255px] border-r-2 border-[#777]">
                <span className="absolute top-9 -right-[5px] size-2.5 border-2 border-[#333] bg-[#c8c8c8]" />
                <div className="flex h-10 items-end border-b-2 border-[#6b6b6b] pl-1.5 leading-4">Name:</div>
                <ul className="grid h-[716px] auto-rows-fr">
                  {FIG.map((r, i) => (
                    <li key={i} className={`flex items-center gap-1 ${r.kind === "bus" ? "text-[#1a1a8c]" : ""}`}>
                      <FigIcon kind={r.kind} />
                      {r.name}
                    </li>
                  ))}
                </ul>
              </div>
              <div className="w-[123px]">
                <div className="flex h-10 items-end border-b-2 border-[#6b6b6b] pl-1 leading-4">Value:</div>
                <ul className="grid h-[716px] auto-rows-fr text-center">
                  {FIG.map((r, i) => <li key={i} className="flex items-center justify-center">{r.val}</li>)}
                </ul>
              </div>
              <FigWaves />
            </div>
            <figcaption className="pl-[204px] font-['Liberation_Serif',serif] text-[32px] leading-9 text-black">
              Figure M.1 MIPS Pipelined Branch Hazard Simulation Waveform
            </figcaption>
          </figure>
        </main>
        <div className="flex w-[17px] flex-col items-center bg-[#f0f0f0] py-1">
          <button aria-label="Scroll up"><Caret dir="u" /></button>
          <div className="flex-[37]" />
          <div className="flex h-[25px] w-4 flex-col items-center justify-center gap-0.5 rounded-xs border border-[#979797] bg-linear-to-r from-[#f4f4f4] to-[#c4c4c4]">
            {[0, 1, 2].map((i) => <span key={i} className="h-px w-2 bg-[#555]" />)}
          </div>
          <div className="flex-1" />
          <button aria-label="Scroll down"><Caret dir="d" /></button>
        </div>
      </div>
    </section>
  );
}

export default function App() {
  return (
    <div className="flex h-screen w-full overflow-hidden">
      <div className="flex w-1/2 flex-col">
        <Editor />
        <Taskbar />
      </div>
      <Browser />
    </div>
  );
}
